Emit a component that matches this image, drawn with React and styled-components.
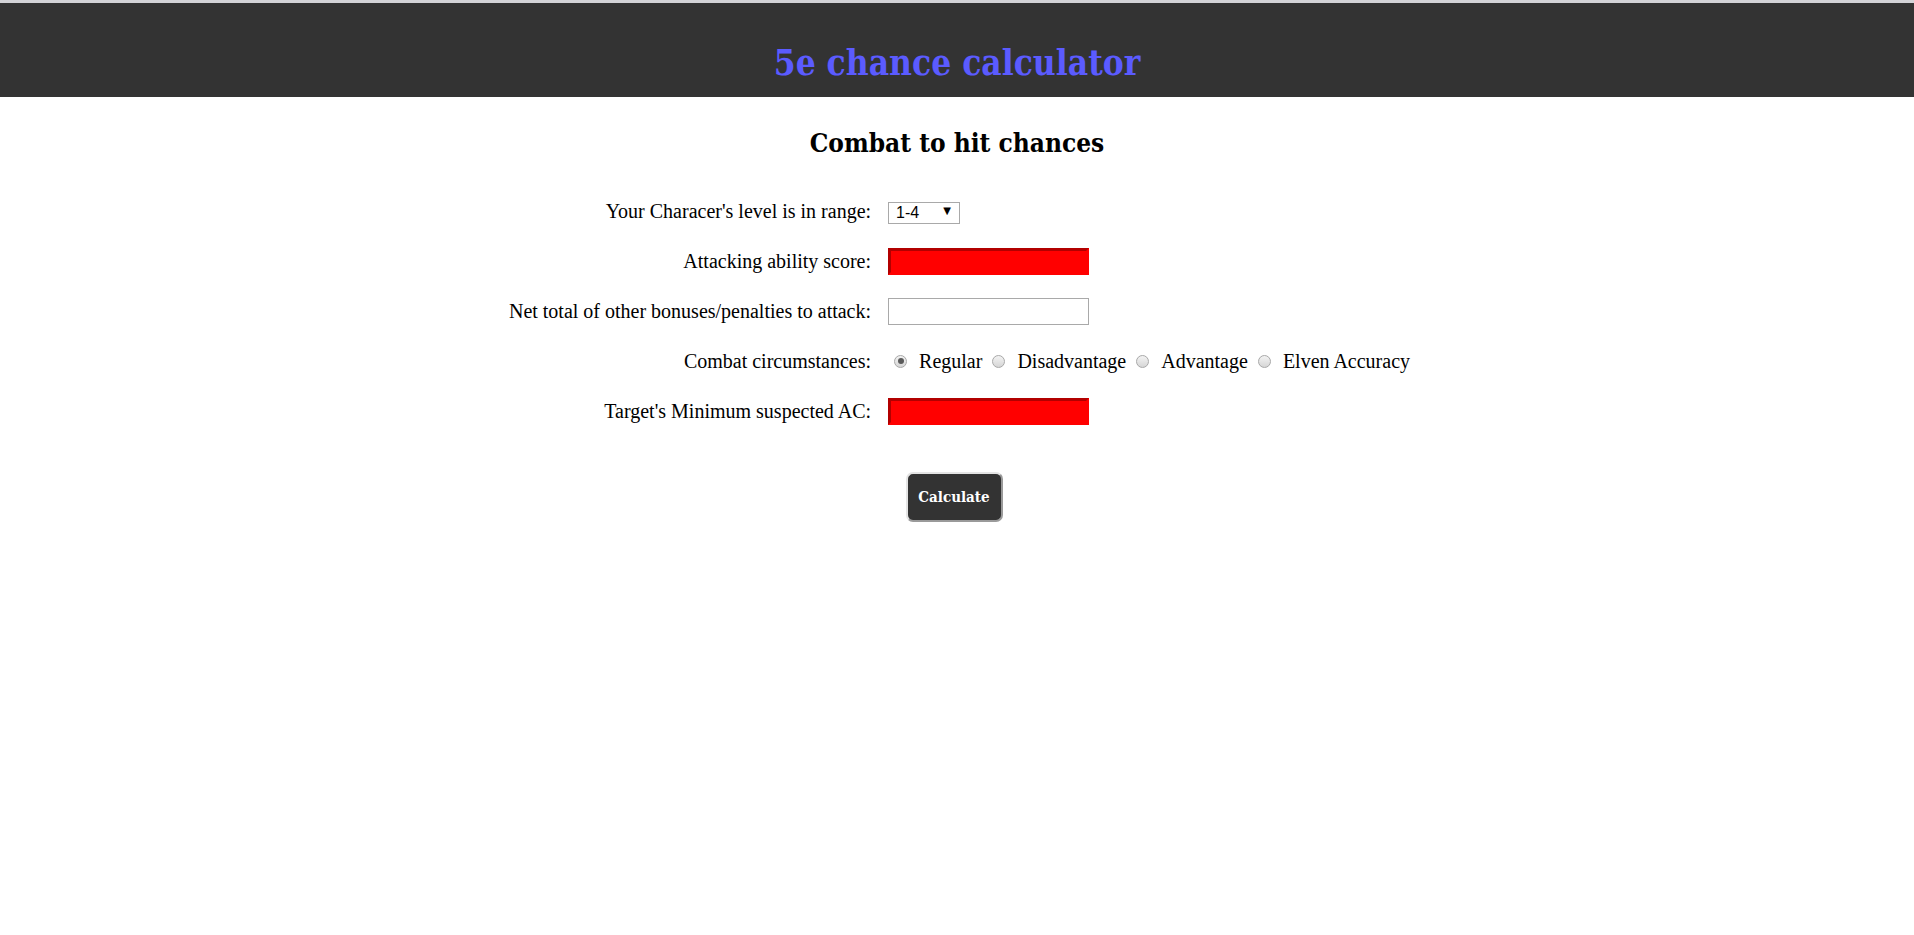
import { useState } from 'react';
import styled, { createGlobalStyle } from "styled-components";

const GlobalStyle = createGlobalStyle`
  body {
    margin: 0;
    background: #fff;
    font-family: "Liberation Serif", "Times New Roman", serif;
    color: #000;
  }
`

const slab = `"DejaVu Serif Condensed", "DejaVu Serif", serif`;

const Header = styled.header`
  border-top: 3px solid #d3d3d7;
  background: #333333;
  height: 94px;
  display: flex;
  align-items: flex-end;
  justify-content: center;
`

const Title = styled.h1`
  margin: 0 0 17px;
  font-family: ${slab};
  font-stretch: condensed;
  font-weight: bold;
  font-size: 35px;
  line-height: 1;
  color: #5b5bff;
`

const SubTitle = styled.h2`
  margin: 30px 0 0;
  text-align: center;
  font-family: ${slab};
  font-stretch: condensed;
  font-weight: bold;
  font-size: 26px;
  line-height: 32px;
`

const Form = styled.form`
  display: grid;
  grid-template-columns: auto auto;
  grid-auto-rows: 50px;
  justify-content: center;
  align-items: center;
  column-gap: 17px;
  margin-top: 27px;
  padding-left: 5px;
`

const Label = styled.label`
  text-align: right;
  font-size: 20px;
  white-space: nowrap;
`

const Cell = styled.div`
  display: flex;
  align-items: center;
  font-size: 20px;
`

const SelectWrap = styled.div`
  position: relative;
  width: 72px;
  height: 22px;

  &::after {
    content: "▼";
    position: absolute;
    right: 9px;
    top: 5px;
    font-size: 10px;
    font-family: "DejaVu Sans", sans-serif;
    pointer-events: none;
  }
`

const Select = styled.select`
  appearance: none;
  width: 100%;
  height: 100%;
  box-sizing: border-box;
  border: 1px solid #a9a9a9;
  border-radius: 0;
  background: #fff;
  padding: 0 0 0 7px;
  font-family: "Liberation Sans", Arial, sans-serif;
  font-size: 16px;
  color: #000;
  outline: none;
`

const TextInput = styled.input`
  box-sizing: border-box;
  width: 201px;
  height: 27px;
  padding: 0 4px;
  font-size: 16px;
  outline: none;
  background: ${p => (p.$invalid ? "#ff0000" : "#fff")};
  border-style: solid;
  border-width: ${p => (p.$invalid ? "3px" : "1px")};
  border-color: ${p => (p.$invalid ? "#b20000 #ff0000 #ff0000 #b20000" : "#a9a9a9")};
`

const Option = styled.label`
  display: flex;
  align-items: center;
  white-space: nowrap;
`

const Radio = styled.input`
  appearance: none;
  width: 13px;
  height: 13px;
  margin: 0 12px 0 10px;
  border-radius: 50%;
  border: 1px solid #a8a8a8;
  background: linear-gradient(#f3f3f3, #d6d6d6);
  box-sizing: border-box;
  display: grid;
  place-items: center;

  ${Option}:first-child & {
    margin-left: 6px;
  }

  &:checked::before {
    content: "";
    width: 6px;
    height: 6px;
    border-radius: 50%;
    background: #5a5a5a;
  }
`

const ButtonRow = styled.div`
  display: flex;
  justify-content: center;
  margin-top: 36px;
  padding-right: 6px;
`

const Button = styled.button`
  width: 97px;
  height: 50px;
  border: 2px solid;
  border-color: #e4e4e4 #9a9a9a #9a9a9a #e4e4e4;
  border-radius: 7px;
  background: #333333;
  color: #fff;
  font-family: ${slab};
  font-stretch: condensed;
  font-weight: bold;
  font-size: 15px;
  cursor: pointer;
`

const circumstances = ["Regular", "Disadvantage", "Advantage", "Elven Accuracy"];

const App = () => {

    const [mode, setMode] = useState("Regular")

    return (
        <>
            <GlobalStyle />
            <Header>
                <Title>5e chance calculator</Title>
            </Header>
            <SubTitle>Combat to hit chances</SubTitle>
            <Form onSubmit={(e) => e.preventDefault()}>
                <Label htmlFor="level">Your Characer's level is in range:</Label>
                <Cell>
                    <SelectWrap>
                        <Select id="level" defaultValue="1-4">
                            <option>1-4</option>
                            <option>5-10</option>
                            <option>11-16</option>
                            <option>17-20</option>
                        </Select>
                    </SelectWrap>
                </Cell>

                <Label htmlFor="ability">Attacking ability score:</Label>
                <Cell><TextInput id="ability" $invalid /></Cell>

                <Label htmlFor="bonus">Net total of other bonuses/penalties to attack:</Label>
                <Cell><TextInput id="bonus" /></Cell>

                <Label>Combat circumstances:</Label>
                <Cell>
                    {circumstances.map((c) => (
                        <Option key={c}>
                            <Radio type="radio" name="circ" checked={mode === c} onChange={() => setMode(c)} />
                            {c}
                        </Option>
                    ))}
                </Cell>

                <Label htmlFor="ac">Target's Minimum suspected AC:</Label>
                <Cell><TextInput id="ac" $invalid /></Cell>
            </Form>
            <ButtonRow>
                <Button type="button">Calculate</Button>
            </ButtonRow>
        </>
    )
}

export default App;
